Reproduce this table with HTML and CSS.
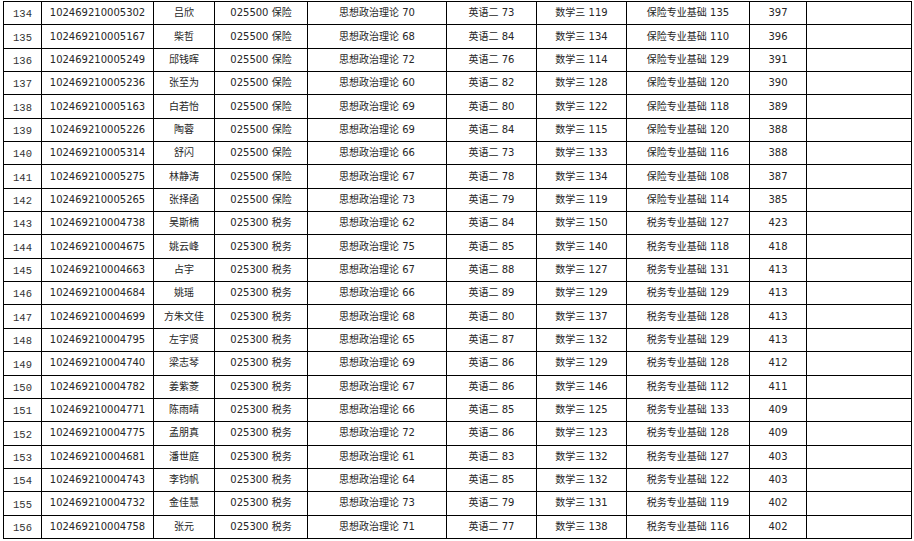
FILE: index.html
```html
<!DOCTYPE html>
<html lang="zh-CN">
<head>
<meta charset="utf-8">
<title>成绩表</title>
<link rel="stylesheet" href="styles.css">
</head>
<body>
<table class="score-table">
<colgroup>
<col class="c-no"><col class="c-id"><col class="c-name"><col class="c-major"><col class="c-pol"><col class="c-eng"><col class="c-math"><col class="c-pro"><col class="c-total"><col class="c-note">
</colgroup>
<tbody>
<tr><td class="no">134</td><td>102469210005302</td><td>吕欣</td><td>025500 保险</td><td>思想政治理论 70</td><td>英语二 73</td><td>数学三 119</td><td>保险专业基础 135</td><td>397</td><td></td></tr>
<tr><td class="no">135</td><td>102469210005167</td><td>柴哲</td><td>025500 保险</td><td>思想政治理论 68</td><td>英语二 84</td><td>数学三 134</td><td>保险专业基础 110</td><td>396</td><td></td></tr>
<tr><td class="no">136</td><td>102469210005249</td><td>邱钱晖</td><td>025500 保险</td><td>思想政治理论 72</td><td>英语二 76</td><td>数学三 114</td><td>保险专业基础 129</td><td>391</td><td></td></tr>
<tr><td class="no">137</td><td>102469210005236</td><td>张至为</td><td>025500 保险</td><td>思想政治理论 60</td><td>英语二 82</td><td>数学三 128</td><td>保险专业基础 120</td><td>390</td><td></td></tr>
<tr><td class="no">138</td><td>102469210005163</td><td>白若怡</td><td>025500 保险</td><td>思想政治理论 69</td><td>英语二 80</td><td>数学三 122</td><td>保险专业基础 118</td><td>389</td><td></td></tr>
<tr><td class="no">139</td><td>102469210005226</td><td>陶蓉</td><td>025500 保险</td><td>思想政治理论 69</td><td>英语二 84</td><td>数学三 115</td><td>保险专业基础 120</td><td>388</td><td></td></tr>
<tr><td class="no">140</td><td>102469210005314</td><td>舒闪</td><td>025500 保险</td><td>思想政治理论 66</td><td>英语二 73</td><td>数学三 133</td><td>保险专业基础 116</td><td>388</td><td></td></tr>
<tr><td class="no">141</td><td>102469210005275</td><td>林静涛</td><td>025500 保险</td><td>思想政治理论 67</td><td>英语二 78</td><td>数学三 134</td><td>保险专业基础 108</td><td>387</td><td></td></tr>
<tr><td class="no">142</td><td>102469210005265</td><td>张择函</td><td>025500 保险</td><td>思想政治理论 73</td><td>英语二 79</td><td>数学三 119</td><td>保险专业基础 114</td><td>385</td><td></td></tr>
<tr><td class="no">143</td><td>102469210004738</td><td>吴斯楠</td><td>025300 税务</td><td>思想政治理论 62</td><td>英语二 84</td><td>数学三 150</td><td>税务专业基础 127</td><td>423</td><td></td></tr>
<tr><td class="no">144</td><td>102469210004675</td><td>姚云峰</td><td>025300 税务</td><td>思想政治理论 75</td><td>英语二 85</td><td>数学三 140</td><td>税务专业基础 118</td><td>418</td><td></td></tr>
<tr><td class="no">145</td><td>102469210004663</td><td>占宇</td><td>025300 税务</td><td>思想政治理论 67</td><td>英语二 88</td><td>数学三 127</td><td>税务专业基础 131</td><td>413</td><td></td></tr>
<tr><td class="no">146</td><td>102469210004684</td><td>姚瑶</td><td>025300 税务</td><td>思想政治理论 66</td><td>英语二 89</td><td>数学三 129</td><td>税务专业基础 129</td><td>413</td><td></td></tr>
<tr><td class="no">147</td><td>102469210004699</td><td>方朱文佳</td><td>025300 税务</td><td>思想政治理论 68</td><td>英语二 80</td><td>数学三 137</td><td>税务专业基础 128</td><td>413</td><td></td></tr>
<tr><td class="no">148</td><td>102469210004795</td><td>左宇贤</td><td>025300 税务</td><td>思想政治理论 65</td><td>英语二 87</td><td>数学三 132</td><td>税务专业基础 129</td><td>413</td><td></td></tr>
<tr><td class="no">149</td><td>102469210004740</td><td>梁志琴</td><td>025300 税务</td><td>思想政治理论 69</td><td>英语二 86</td><td>数学三 129</td><td>税务专业基础 128</td><td>412</td><td></td></tr>
<tr><td class="no">150</td><td>102469210004782</td><td>姜紫菱</td><td>025300 税务</td><td>思想政治理论 67</td><td>英语二 86</td><td>数学三 146</td><td>税务专业基础 112</td><td>411</td><td></td></tr>
<tr><td class="no">151</td><td>102469210004771</td><td>陈雨晴</td><td>025300 税务</td><td>思想政治理论 66</td><td>英语二 85</td><td>数学三 125</td><td>税务专业基础 133</td><td>409</td><td></td></tr>
<tr><td class="no">152</td><td>102469210004775</td><td>孟朋真</td><td>025300 税务</td><td>思想政治理论 72</td><td>英语二 86</td><td>数学三 123</td><td>税务专业基础 128</td><td>409</td><td></td></tr>
<tr><td class="no">153</td><td>102469210004681</td><td>潘世庭</td><td>025300 税务</td><td>思想政治理论 61</td><td>英语二 83</td><td>数学三 132</td><td>税务专业基础 127</td><td>403</td><td></td></tr>
<tr><td class="no">154</td><td>102469210004743</td><td>李钧帆</td><td>025300 税务</td><td>思想政治理论 64</td><td>英语二 85</td><td>数学三 132</td><td>税务专业基础 122</td><td>403</td><td></td></tr>
<tr><td class="no">155</td><td>102469210004732</td><td>金佳慧</td><td>025300 税务</td><td>思想政治理论 73</td><td>英语二 79</td><td>数学三 131</td><td>税务专业基础 119</td><td>402</td><td></td></tr>
<tr><td class="no">156</td><td>102469210004758</td><td>张元</td><td>025300 税务</td><td>思想政治理论 71</td><td>英语二 77</td><td>数学三 138</td><td>税务专业基础 116</td><td>402</td><td></td></tr>
</tbody>
</table>
</body>
</html>
```
FILE: styles.css
```css
html, body {
  margin: 0;
  padding: 0;
  background: #ffffff;
}
body {
  padding: 1px 0 0 3px;
}
.score-table {
  border-collapse: collapse;
  table-layout: fixed;
  width: 909px;
  font-family: "DejaVu Sans", "Noto Sans CJK SC", sans-serif;
  font-size: 10px;
  color: #262626;
}
.score-table td {
  border: 1px solid #000;
  padding: 0;
  height: 22.35px;
  text-align: center;
  vertical-align: middle;
  white-space: nowrap;
  overflow: hidden;
  line-height: 12px;
}
.score-table td.no {
  font-family: "Liberation Mono", "Noto Sans CJK SC", monospace;
  font-size: 10.5px;
  color: #333;
  line-height: 16px;
  vertical-align: bottom;
  padding-bottom: 2px;
  height: 20.35px;
}
.c-no { width: 38px; }
.c-id { width: 112px; }
.c-name { width: 61px; }
.c-major { width: 93px; }
.c-pol { width: 139px; }
.c-eng { width: 90px; }
.c-math { width: 90px; }
.c-pro { width: 123px; }
.c-total { width: 57px; }
.c-note { width: 105px; }
```
